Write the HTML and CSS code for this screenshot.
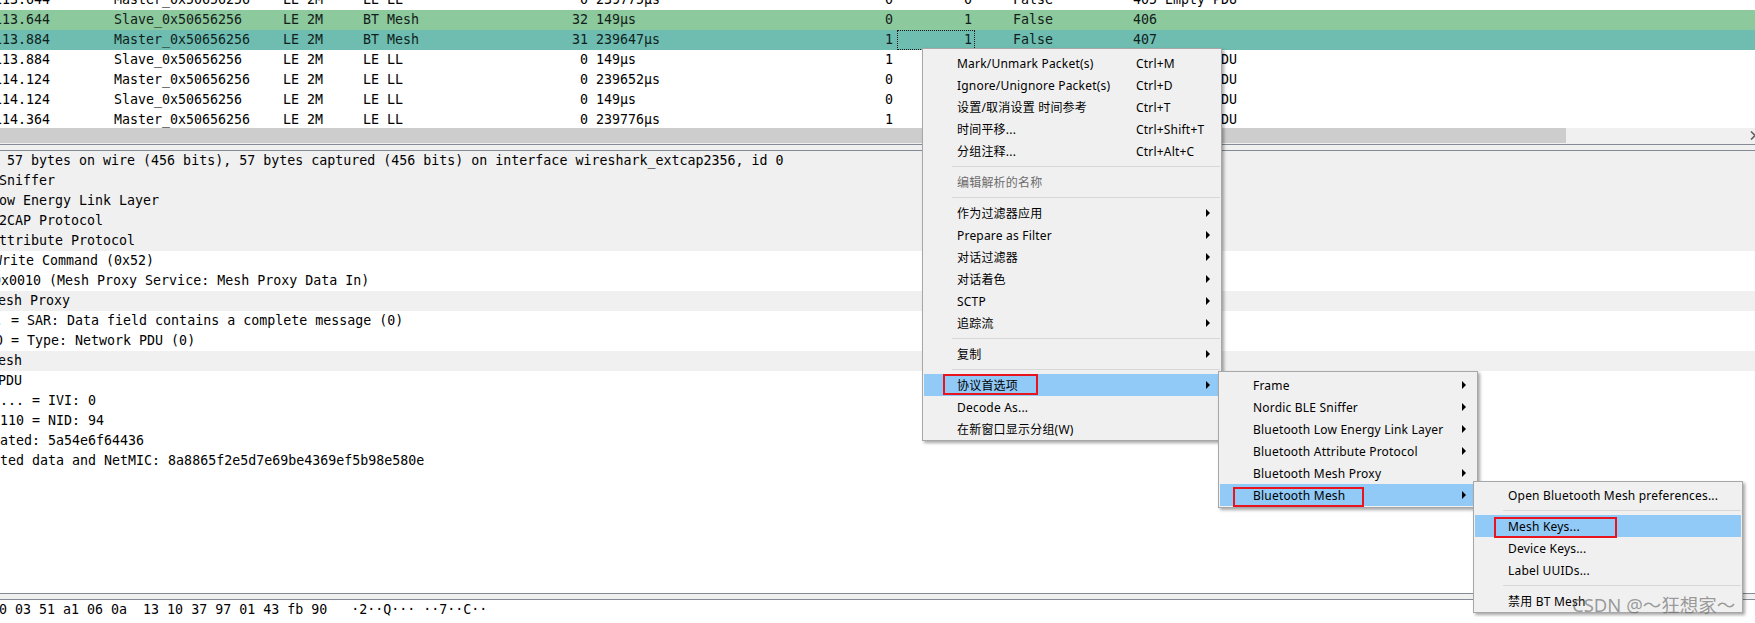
FILE: index.html
```html
<!DOCTYPE html>
<html>
<head>
<meta charset="utf-8">
<link rel="stylesheet" href="styles.css">
</head>
<body>
<div class="app">
  <div class="plist">
    <div class="prows">
      <div class="prow"><span class="c t">113.644</span><span class="c e"></span><span class="c s">Master_0x50656256</span><span class="c p">LE 2M</span><span class="c pr">LE LL</span><span class="c l">0</span><span class="c i">239775µs</span><span class="c a">0</span><span class="c b">0</span><span class="c f">False</span><span class="c n">405 Empty PDU</span></div>
      <div class="prow green"><span class="c t">113.644</span><span class="c e"></span><span class="c s">Slave_0x50656256</span><span class="c p">LE 2M</span><span class="c pr">BT Mesh</span><span class="c l">32</span><span class="c i">149µs</span><span class="c a">0</span><span class="c b">1</span><span class="c f">False</span><span class="c n">406</span></div>
      <div class="prow teal"><span class="c t">113.884</span><span class="c e"></span><span class="c s">Master_0x50656256</span><span class="c p">LE 2M</span><span class="c pr">BT Mesh</span><span class="c l">31</span><span class="c i">239647µs</span><span class="c a">1</span><span class="c b focus">1</span><span class="c f">False</span><span class="c n">407</span></div>
      <div class="prow"><span class="c t">113.884</span><span class="c e"></span><span class="c s">Slave_0x50656256</span><span class="c p">LE 2M</span><span class="c pr">LE LL</span><span class="c l">0</span><span class="c i">149µs</span><span class="c a">1</span><span class="c b">0</span><span class="c f">False</span><span class="c n">408 Empty PDU</span></div>
      <div class="prow"><span class="c t">114.124</span><span class="c e"></span><span class="c s">Master_0x50656256</span><span class="c p">LE 2M</span><span class="c pr">LE LL</span><span class="c l">0</span><span class="c i">239652µs</span><span class="c a">0</span><span class="c b">1</span><span class="c f">False</span><span class="c n">409 Empty PDU</span></div>
      <div class="prow"><span class="c t">114.124</span><span class="c e"></span><span class="c s">Slave_0x50656256</span><span class="c p">LE 2M</span><span class="c pr">LE LL</span><span class="c l">0</span><span class="c i">149µs</span><span class="c a">0</span><span class="c b">0</span><span class="c f">False</span><span class="c n">410 Empty PDU</span></div>
      <div class="prow"><span class="c t">114.364</span><span class="c e"></span><span class="c s">Master_0x50656256</span><span class="c p">LE 2M</span><span class="c pr">LE LL</span><span class="c l">0</span><span class="c i">239776µs</span><span class="c a">1</span><span class="c b">1</span><span class="c f">False</span><span class="c n">411 Empty PDU</span></div>
    </div>
  </div>
  <div class="hscroll">
    <div class="thumb"></div>
    <div class="track">
      <svg class="sarrow" width="8" height="9" viewBox="0 0 8 9"><path d="M1 0.5 L5 4.5 L1 8.5" fill="none" stroke="#606060" stroke-width="1.6"/></svg>
    </div>
  </div>
  <div class="split"><div class="lines"></div></div>
  <div class="detail">
    <div class="dr g in1"> 57 bytes on wire (456 bits), 57 bytes captured (456 bits) on interface wireshark_extcap2356, id 0</div>
    <div class="dr g in1">Sniffer</div>
    <div class="dr g in1">ow Energy Link Layer</div>
    <div class="dr g in1">2CAP Protocol</div>
    <div class="dr g in1">ttribute Protocol</div>
    <div class="dr in6">Write Command (0x52)</div>
    <div class="dr in7">0x0010 (Mesh Proxy Service: Mesh Proxy Data In)</div>
    <div class="dr g in10">Mesh Proxy</div>
    <div class="dr in5">. = SAR: Data field contains a complete message (0)</div>
    <div class="dr in5">0 = Type: Network PDU (0)</div>
    <div class="dr g in10">Mesh</div>
    <div class="dr in2">PDU</div>
    <div class="dr">... = IVI: 0</div>
    <div class="dr">110 = NID: 94</div>
    <div class="dr">ated: 5a54e6f64436</div>
    <div class="dr">ted data and NetMIC: 8a8865f2e5d7e69be4369ef5b98e580e</div>
  </div>
  <div class="split2"></div>
  <div class="bytes">
    <div class="br">0 03 51 a1 06 0a  13 10 37 97 01 43 fb 90   ·2··Q··· ··7··C··</div>
    <div class="br">0 65 f2 e5 d7 e6 9b e4  36 9e f5 b9 8e 58 0e 8a   ·e······ 6···X··</div>
  </div>
</div>

<div class="menu main">
  <div class="mi"><span class="lb">Mark/Unmark Packet(s)</span><span class="sc">Ctrl+M</span></div>
  <div class="mi"><span class="lb">Ignore/Unignore Packet(s)</span><span class="sc">Ctrl+D</span></div>
  <div class="mi"><span class="lb">设置/取消设置 时间参考</span><span class="sc">Ctrl+T</span></div>
  <div class="mi"><span class="lb">时间平移...</span><span class="sc">Ctrl+Shift+T</span></div>
  <div class="mi"><span class="lb">分组注释...</span><span class="sc">Ctrl+Alt+C</span></div>
  <div class="sep"></div>
  <div class="mi dis"><span class="lb">编辑解析的名称</span></div>
  <div class="sep"></div>
  <div class="mi"><span class="lb">作为过滤器应用</span><span class="arr"></span></div>
  <div class="mi"><span class="lb">Prepare as Filter</span><span class="arr"></span></div>
  <div class="mi"><span class="lb">对话过滤器</span><span class="arr"></span></div>
  <div class="mi"><span class="lb">对话着色</span><span class="arr"></span></div>
  <div class="mi"><span class="lb">SCTP</span><span class="arr"></span></div>
  <div class="mi"><span class="lb">追踪流</span><span class="arr"></span></div>
  <div class="sep"></div>
  <div class="mi"><span class="lb">复制</span><span class="arr"></span></div>
  <div class="sep"></div>
  <div class="mi hl"><span class="lb">协议首选项</span><span class="arr"></span><span class="red red-main"></span></div>
  <div class="mi"><span class="lb">Decode As...</span></div>
  <div class="mi"><span class="lb">在新窗口显示分组(W)</span></div>
</div>

<div class="menu sub1">
  <div class="mi"><span>Frame</span><span class="arr"></span></div>
  <div class="mi"><span>Nordic BLE Sniffer</span><span class="arr"></span></div>
  <div class="mi"><span>Bluetooth Low Energy Link Layer</span><span class="arr"></span></div>
  <div class="mi"><span>Bluetooth Attribute Protocol</span><span class="arr"></span></div>
  <div class="mi"><span>Bluetooth Mesh Proxy</span><span class="arr"></span></div>
  <div class="mi hl"><span>Bluetooth Mesh</span><span class="arr"></span><span class="red red-sub1"></span></div>
</div>

<div class="menu sub2">
  <div class="mi"><span>Open Bluetooth Mesh preferences...</span></div>
  <div class="sep"></div>
  <div class="mi hl"><span>Mesh Keys...</span><span class="red red-sub2"></span></div>
  <div class="mi"><span>Device Keys...</span></div>
  <div class="mi"><span>Label UUIDs...</span></div>
  <div class="sep"></div>
  <div class="mi"><span>禁用 BT Mesh</span></div>
</div>

<div class="watermark">CSDN @～狂想家～</div>
</body>
</html>
```

FILE: styles.css
```css
html, body {
  margin: 0;
  padding: 0;
}
body {
  width: 1755px;
  height: 623px;
  overflow: hidden;
  background: #ffffff;
  position: relative;
}
.app {
  display: flex;
  flex-direction: column;
  width: 1755px;
  height: 623px;
  overflow: hidden;
  font-family: "DejaVu Sans Mono", "Liberation Mono", monospace;
  font-size: 13.3px;
  color: #000;
}

/* packet list */
.plist {
  height: 128px;
  overflow: hidden;
  flex: none;
}
.prows {
  margin-top: -10px;
}
.prow {
  display: grid;
  grid-template-columns: 96px 52px 169px 80px 100px 135px 208px 97px 78px 152px 1fr;
  height: 20px;
  line-height: 20px;
  margin-left: -40px;
  white-space: pre;
  background: #ffffff;
}
.prow.green { background: #8cc99c; color: #12201a; }
.prow.teal { background: #6ebdb0; color: #0f1f1d; }
.c { overflow: hidden; }
.t { text-align: right; padding-right: 6px; }
.s, .p, .pr { padding-left: 6px; }
.l { text-align: right; padding-right: 4px; }
.i { padding-left: 4px; }
.a { text-align: right; padding-right: 4px; }
.b { text-align: right; padding-right: 3px; }
.f { padding-left: 38px; }
.n { padding-left: 6px; }
.focus {
  outline: 1px dotted #1a1a1a;
  outline-offset: -1px;
}

/* horizontal scrollbar */
.hscroll {
  height: 15px;
  display: flex;
  flex: none;
}
.thumb {
  width: 1566px;
  background: #cdcdcd;
}
.track {
  flex: 1;
  background: #f0f0f0;
  display: flex;
  align-items: center;
  justify-content: flex-end;
}
.sarrow {
  margin-right: -3px;
}

/* splitters */
.split {
  flex: none;
  background: #f0f0f0;
  padding-top: 1px;
}
.split .lines {
  height: 5px;
  border-top: 1px solid #858b94;
  border-bottom: 1px solid #858b94;
}
.split2 {
  flex: none;
  height: 5px;
  background: #f0f0f0;
  border-top: 1px solid #858b94;
  border-bottom: 1px solid #858b94;
}

/* details */
.detail {
  height: 442px;
  flex: none;
  overflow: hidden;
}
.dr {
  height: 20px;
  line-height: 20px;
  white-space: pre;
}
.dr.g { background: #f0f0f0; }
.in1 { text-indent: -1px; }
.in2 { text-indent: -2px; }
.in5 { text-indent: -5px; }
.in6 { text-indent: -6px; }
.in7 { text-indent: -7px; }
.in10 { text-indent: -10px; }

/* bytes */
.bytes {
  flex: 1;
  overflow: hidden;
}
.br {
  height: 20px;
  line-height: 19px;
  white-space: pre;
  text-indent: -1px;
}

/* menus */
.menu {
  position: absolute;
  background: #f0f0f0;
  border: 1px solid #a7a7a7;
  box-shadow: 2px 2px 3px rgba(0, 0, 0, 0.35);
  font-family: "Noto Sans", "Noto Sans CJK SC", sans-serif;
  font-size: 12px;
  letter-spacing: 0.2px;
  color: #000;
}
.main {
  left: 922px;
  top: 48px;
  width: 296px;
  padding: 3px 1px 0 1px;
}
.sub1 {
  left: 1218px;
  top: 371px;
  width: 256px;
  padding: 2px 1px 1px 1px;
}
.sub2 {
  left: 1473px;
  top: 481px;
  width: 266px;
  padding: 2px 1px 0 1px;
}
.mi {
  position: relative;
  height: 22px;
  display: flex;
  align-items: center;
  padding-left: 33px;
  white-space: nowrap;
}
.mi .lb {
  width: 179px;
  flex: none;
}
.mi.hl { background: #91c9f7; }
.mi.dis { color: #6d6d6d; }
.arr {
  margin-left: auto;
  margin-right: 10px;
  width: 0;
  height: 0;
  border-left: 4px solid #000;
  border-top: 4px solid transparent;
  border-bottom: 4px solid transparent;
}
.sep {
  height: 4px;
  margin-left: 28px;
  margin-bottom: 4px;
  border-bottom: 1px solid #d7d7d7;
}
.red {
  position: absolute;
  box-sizing: border-box;
  border: 2px solid #e8141e;
}
.red-main { left: 19px; top: 0; width: 95px; height: 21px; }
.red-sub1 { left: 13px; top: 3px; width: 131px; height: 20px; }
.red-sub2 { left: 19px; top: 2px; width: 123px; height: 21px; }

.watermark {
  position: absolute;
  left: 1572px;
  top: 592px;
  font-family: "Noto Sans", "Noto Sans CJK SC", sans-serif;
  font-size: 18.5px;
  line-height: 26px;
  color: rgba(95, 95, 95, 0.6);
  white-space: nowrap;
}
```
